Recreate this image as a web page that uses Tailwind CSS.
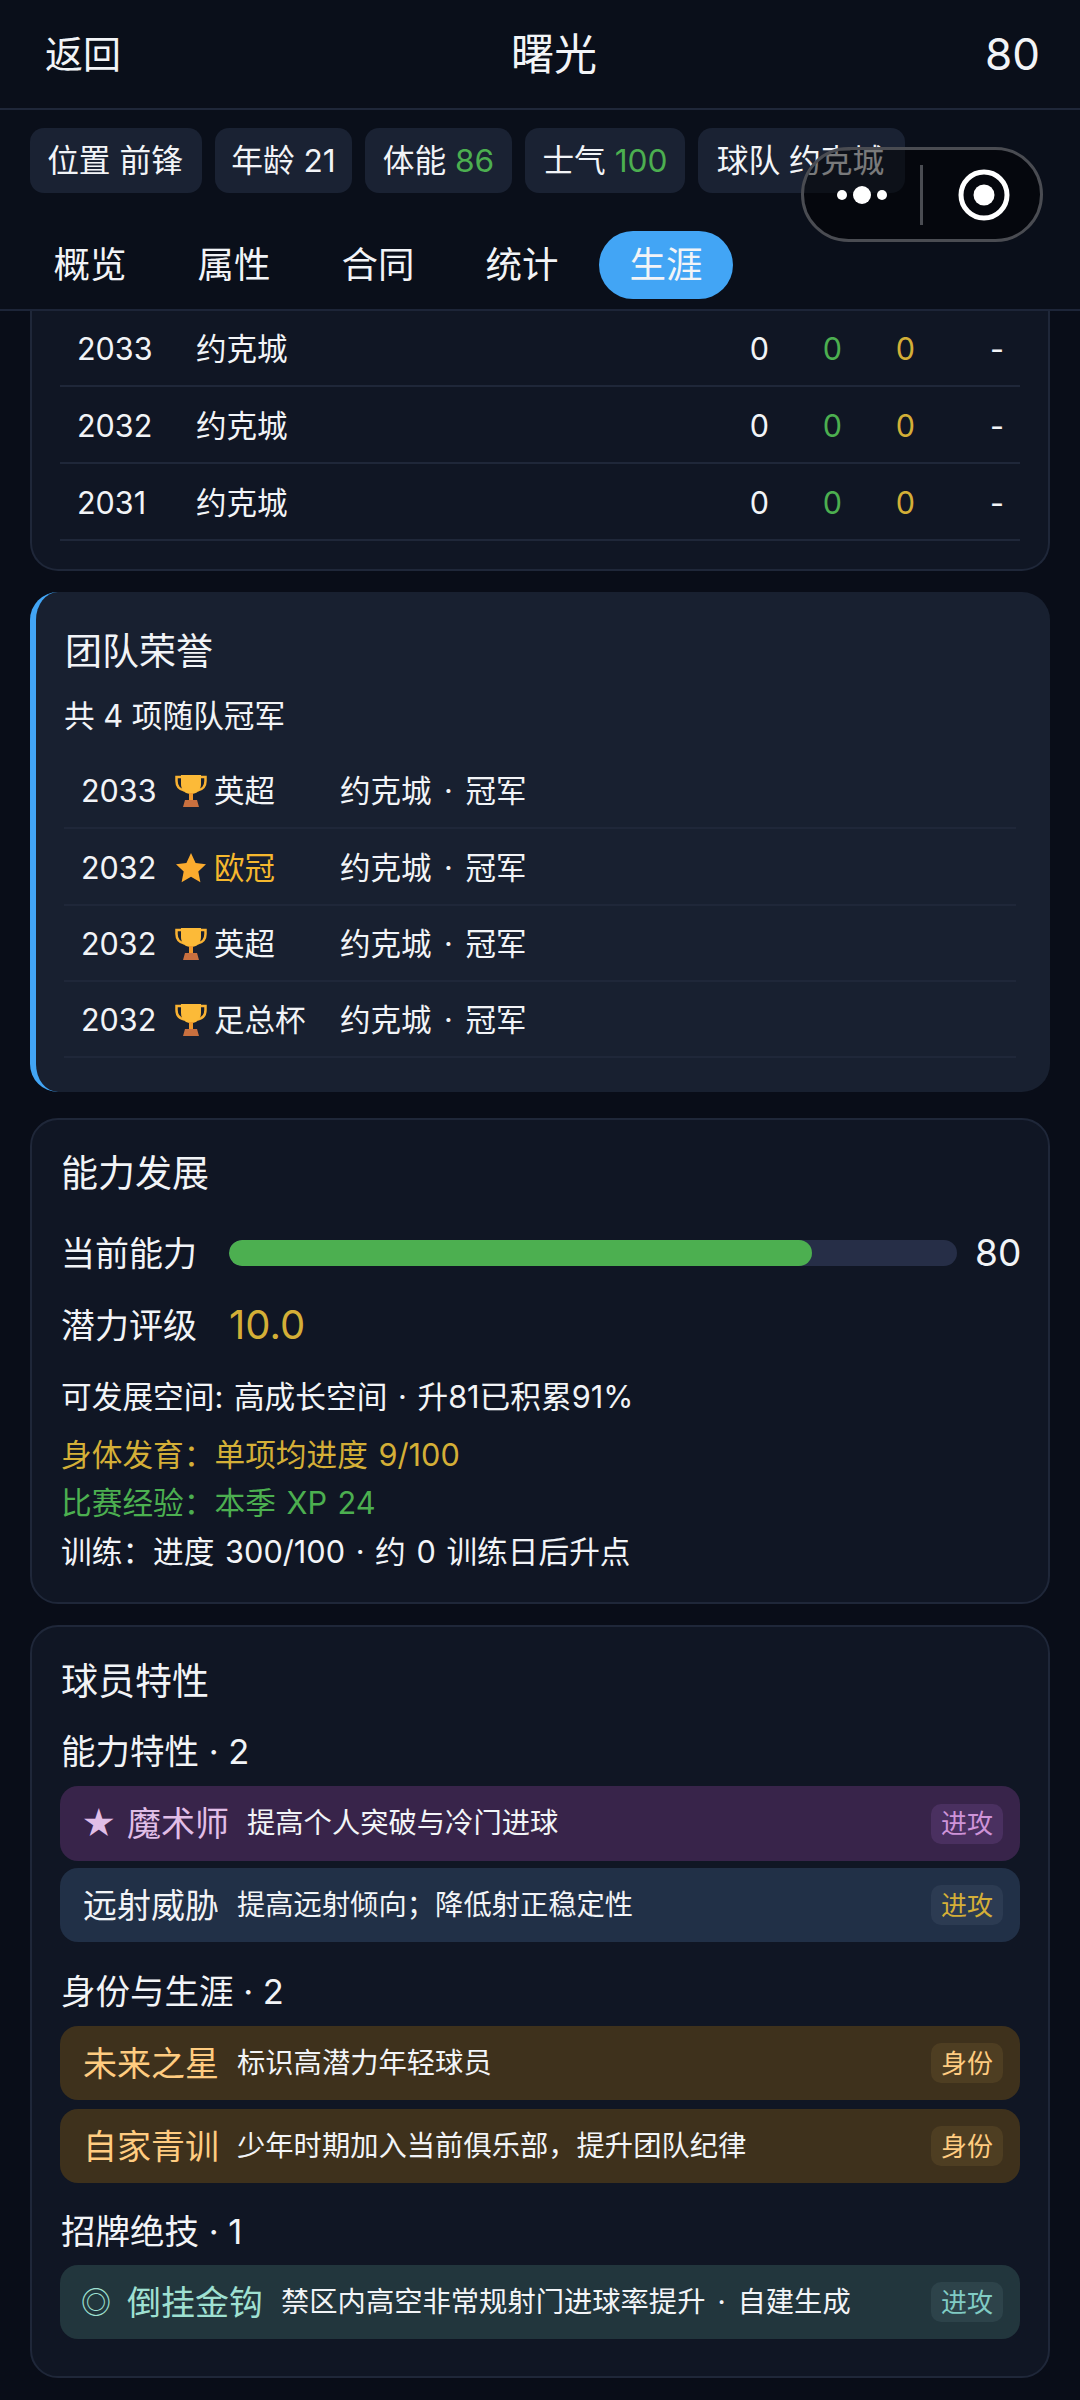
<!DOCTYPE html>
<html lang="zh-CN">
<head>
<meta charset="utf-8">
<script src="https://cdn.jsdelivr.net/npm/@tailwindcss/browser@4"></script>
</head>
<body class="m-0 bg-[#090d18]">
<div class="relative w-[1080px] h-[2400px] overflow-hidden bg-[#090d18] text-[#f2f4f7] font-['Inter','Noto_Sans_CJK_SC',sans-serif]">

  <header class="bg-[#0a0f1a] border-b-2 border-[#1d2538]">
    <div class="h-[110px] border-b-2 border-[#1f2739] pl-[45px] pr-[40px] flex items-center justify-between">
      <span class="text-[38px]">返回</span>
      <span class="text-[43px] ml-[2px]">曙光</span>
      <span class="text-[44px]">80</span>
    </div>
    <div class="flex gap-[13px] px-[30px] pt-[18px] text-[31.700px]">
      <div class="h-[65px] w-[172px] rounded-[14px] bg-[#1a2233] flex items-center justify-center whitespace-nowrap pr-[2px]">位置 前锋</div>
      <div class="h-[65px] w-[137px] rounded-[14px] bg-[#1a2233] flex items-center justify-center whitespace-nowrap">年龄 21</div>
      <div class="h-[65px] w-[147px] rounded-[14px] bg-[#1a2233] flex items-center justify-center whitespace-nowrap">体能&nbsp;<span class="text-[#4caf50]">86</span></div>
      <div class="h-[65px] w-[160px] rounded-[14px] bg-[#1a2233] flex items-center justify-center whitespace-nowrap">士气&nbsp;<span class="text-[#4caf50]">100</span></div>
      <div class="h-[65px] w-[207px] rounded-[14px] bg-[#1a2233] flex items-center justify-center whitespace-nowrap pr-[2px]">球队 约克城</div>
    </div>
    <div class="flex gap-[10px] pl-[23px] pt-[38px] pb-[10px] text-[36.500px]">
      <div class="h-[68px] w-[134px] rounded-full flex items-center justify-center">概览</div>
      <div class="h-[68px] w-[134px] rounded-full flex items-center justify-center">属性</div>
      <div class="h-[68px] w-[134px] rounded-full flex items-center justify-center">合同</div>
      <div class="h-[68px] w-[134px] rounded-full flex items-center justify-center">统计</div>
      <div class="h-[68px] w-[134px] rounded-full flex items-center justify-center bg-[#42a5f5]">生涯</div>
    </div>
  </header>

  <main class="px-[30px]">
    <section class="bg-[#101624] border-x-2 border-b-2 border-[#1f2739] rounded-b-[28px] px-[28px] pb-[28px] text-[30.500px]">
      <div class="h-[76px] pl-[17px] pt-[2px] flex items-center border-b-2 border-[#1f2739]">
        <span class="w-[119px]">2033</span><span class="w-[400px]">约克城</span>
        <span class="w-[173px] text-right">0</span><span class="w-[73px] text-right text-[#4caf50]">0</span><span class="w-[73px] text-right text-[#d4af37]">0</span><span class="w-[89px] text-right">-</span>
      </div>
      <div class="h-[77px] pl-[17px] pt-[2px] flex items-center border-b-2 border-[#1f2739]">
        <span class="w-[119px]">2032</span><span class="w-[400px]">约克城</span>
        <span class="w-[173px] text-right">0</span><span class="w-[73px] text-right text-[#4caf50]">0</span><span class="w-[73px] text-right text-[#d4af37]">0</span><span class="w-[89px] text-right">-</span>
      </div>
      <div class="h-[77px] pl-[17px] pt-[2px] flex items-center border-b-2 border-[#1f2739]">
        <span class="w-[119px]">2031</span><span class="w-[400px]">约克城</span>
        <span class="w-[173px] text-right">0</span><span class="w-[73px] text-right text-[#4caf50]">0</span><span class="w-[73px] text-right text-[#d4af37]">0</span><span class="w-[89px] text-right">-</span>
      </div>
    </section>

    <section class="mt-[21px] h-[500px] bg-[#182030] border-l-[6px] border-[#42a5f5] rounded-[28px] pl-[28px] pr-[34px] pt-[36px]">
      <h2 class="h-[48px] flex items-center pl-[1px] text-[37px] font-normal">团队荣誉</h2>
      <p class="mt-[18px] h-[44px] flex items-center text-[30.700px]">共 4 项随队冠军</p>
      <div class="mt-[15px] text-[30.500px] [word-spacing:4px]">
        <div class="h-[76px] pl-[17px] pt-[2px] flex items-center border-b-2 border-[#1f2739]">
          <span class="w-[94px]">2033</span>
          <svg class="w-[32px] h-[34px]" viewBox="0 0 32 34"><path d="M6 3H1.500v4c0 5 3 8.500 8 9.500M26 3h4.500v4c0 5-3 8.500-8 9.500" fill="none" stroke="#f9b233" stroke-width="2.500"/><path d="M6 1h20v9c0 6-4 10-10 10S6 16 6 10z" fill="#fcba38"/><rect x="14" y="19" width="4" height="7" fill="#f0982c"/><path d="M10 26h12l2 7H8z" fill="#c9703f"/></svg>
          <span class="ml-[7px] w-[126px]">英超</span><span>约克城 · 冠军</span>
        </div>
        <div class="h-[77px] pl-[17px] pt-[2px] flex items-center border-b-2 border-[#1f2739]">
          <span class="w-[94px]">2032</span>
          <svg class="w-[32px] h-[32px]" viewBox="0 0 32 32"><path d="M16 1l4.600 10 10.400 1.200-7.700 7.200 2.100 10.800L16 24.800l-9.400 5.400 2.100-10.800L1 12.200 11.400 11z" fill="#fbab2e"/></svg>
          <span class="ml-[7px] w-[126px] text-[#f5b82e]">欧冠</span><span>约克城 · 冠军</span>
        </div>
        <div class="h-[76px] pl-[17px] pt-[2px] flex items-center border-b-2 border-[#1f2739]">
          <span class="w-[94px]">2032</span>
          <svg class="w-[32px] h-[34px]" viewBox="0 0 32 34"><path d="M6 3H1.500v4c0 5 3 8.500 8 9.500M26 3h4.500v4c0 5-3 8.500-8 9.500" fill="none" stroke="#f9b233" stroke-width="2.500"/><path d="M6 1h20v9c0 6-4 10-10 10S6 16 6 10z" fill="#fcba38"/><rect x="14" y="19" width="4" height="7" fill="#f0982c"/><path d="M10 26h12l2 7H8z" fill="#c9703f"/></svg>
          <span class="ml-[7px] w-[126px]">英超</span><span>约克城 · 冠军</span>
        </div>
        <div class="h-[76px] pl-[17px] pt-[2px] flex items-center border-b-2 border-[#1f2739]">
          <span class="w-[94px]">2032</span>
          <svg class="w-[32px] h-[34px]" viewBox="0 0 32 34"><path d="M6 3H1.500v4c0 5 3 8.500 8 9.500M26 3h4.500v4c0 5-3 8.500-8 9.500" fill="none" stroke="#f9b233" stroke-width="2.500"/><path d="M6 1h20v9c0 6-4 10-10 10S6 16 6 10z" fill="#fcba38"/><rect x="14" y="19" width="4" height="7" fill="#f0982c"/><path d="M10 26h12l2 7H8z" fill="#c9703f"/></svg>
          <span class="ml-[7px] w-[126px]">足总杯</span><span>约克城 · 冠军</span>
        </div>
      </div>
    </section>

    <section class="mt-[26px] h-[486px] bg-[#101624] border-2 border-[#1f2739] rounded-[28px] px-[29px] pt-[30px]">
      <h2 class="h-[48px] flex items-center text-[37px] font-normal">能力发展</h2>
      <div class="mt-[30px] h-[50px] flex items-center">
        <span class="w-[168px] shrink-0 text-[34px]">当前能力</span>
        <div class="w-[728px] shrink-0 h-[26px] rounded-full bg-[#262e47] overflow-hidden"><div class="h-full w-[583px] rounded-full bg-[#4caf50]"></div></div>
        <span class="ml-[18px] shrink-0 text-[37px]">80</span>
      </div>
      <div class="mt-[22px] h-[50px] flex items-center">
        <span class="w-[168px] text-[34px]">潜力评级</span>
        <span class="text-[40px] text-[#d4af37]">10.0</span>
      </div>
      <div class="text-[30.700px] [word-spacing:2px] whitespace-nowrap">
        <p class="mt-[25px] h-[44px] flex items-center">可发展空间: 高成长空间 · 升81已积累91%</p>
        <p class="mt-[14px] h-[44px] flex items-center text-[#d4af37]">身体发育：单项均进度 9/100</p>
        <p class="mt-[4px] h-[44px] flex items-center text-[#4caf50]">比赛经验：本季 XP 24</p>
        <p class="mt-[5px] h-[44px] flex items-center">训练：进度 300/100 · 约 0 训练日后升点</p>
      </div>
    </section>

    <section class="mt-[21px] h-[753px] bg-[#101624] border-2 border-[#1f2739] rounded-[28px] px-[28px] pt-[31px]">
      <h2 class="h-[48px] pl-[1px] flex items-center text-[37px] font-normal">球员特性</h2>

      <h3 class="mt-[23px] h-[46px] pl-[1px] flex items-center text-[34.500px] font-normal whitespace-pre">能力特性 · 2</h3>
      <div class="mt-[11px] h-[75px] rounded-[18px] bg-[#38244a] pl-[21px] pr-[17px] flex items-center">
        <span class="w-[46px] text-[34px] text-[#e1bee7]">★</span>
        <span class="text-[34px] text-[#e1bee7]">魔术师</span>
        <span class="ml-[18px] text-[28.300px]">提高个人突破与冷门进球</span>
        <span class="ml-auto w-[72px] h-[40px] rounded-[10px] bg-[#4a3060] text-[#ce93d8] text-[26px] flex items-center justify-center">进攻</span>
      </div>
      <div class="mt-[7px] h-[74px] rounded-[18px] bg-[#213047] pl-[23px] pr-[17px] flex items-center">
        <span class="text-[34px]">远射威胁</span>
        <span class="ml-[18px] text-[28.300px]">提高远射倾向；降低射正稳定性</span>
        <span class="ml-auto w-[72px] h-[40px] rounded-[10px] bg-[#2c3b52] text-[#d4af37] text-[26px] flex items-center justify-center">进攻</span>
      </div>

      <h3 class="mt-[27px] h-[46px] pl-[1px] flex items-center text-[34.500px] font-normal whitespace-pre">身份与生涯 · 2</h3>
      <div class="mt-[11px] h-[74px] rounded-[18px] bg-[#3e311c] pl-[23px] pr-[17px] flex items-center">
        <span class="text-[34px] text-[#ffcc80]">未来之星</span>
        <span class="ml-[18px] text-[28.300px]">标识高潜力年轻球员</span>
        <span class="ml-auto w-[72px] h-[40px] rounded-[10px] bg-[#4e3e22] text-[#ffcc80] text-[26px] flex items-center justify-center">身份</span>
      </div>
      <div class="mt-[9px] h-[74px] rounded-[18px] bg-[#3e311c] pl-[23px] pr-[17px] flex items-center">
        <span class="text-[34px] text-[#ffcc80]">自家青训</span>
        <span class="ml-[18px] text-[28.300px]">少年时期加入当前俱乐部，提升团队纪律</span>
        <span class="ml-auto w-[72px] h-[40px] rounded-[10px] bg-[#4e3e22] text-[#ffcc80] text-[26px] flex items-center justify-center">身份</span>
      </div>

      <h3 class="mt-[26px] h-[46px] pl-[1px] flex items-center text-[34.500px] font-normal whitespace-pre">招牌绝技 · 1</h3>
      <div class="mt-[10px] h-[74px] rounded-[18px] bg-[#22363d] pl-[21px] pr-[17px] flex items-center">
        <span class="w-[46px] text-[30px] text-[#9fe0d2]">◎</span>
        <span class="text-[34px] text-[#9fe0d2]">倒挂金钩</span>
        <span class="ml-[18px] text-[28.300px] [word-spacing:4px]">禁区内高空非常规射门进球率提升 · 自建生成</span>
        <span class="ml-auto w-[72px] h-[40px] rounded-[10px] bg-[#2d434a] text-[#80cbc4] text-[26px] flex items-center justify-center">进攻</span>
      </div>
    </section>
  </main>

  <div class="absolute left-[801px] top-[147px] w-[242px] h-[95px] rounded-full border-[3px] border-[#4a4c52] bg-black/50 flex items-center">
    <div class="w-[116px] flex items-center justify-center gap-[6px]">
      <span class="w-[10px] h-[10px] rounded-full bg-white"></span>
      <span class="w-[18px] h-[18px] rounded-full bg-white"></span>
      <span class="w-[10px] h-[10px] rounded-full bg-white"></span>
    </div>
    <span class="w-[3px] h-[60px] bg-[#4a4c52]"></span>
    <svg class="ml-[35px] w-[52px] h-[52px]" viewBox="0 0 52 52"><circle cx="26" cy="26" r="23" fill="none" stroke="#fff" stroke-width="5"/><circle cx="26" cy="26" r="10.500" fill="#fff"/></svg>
  </div>
</div>
</body>
</html>
